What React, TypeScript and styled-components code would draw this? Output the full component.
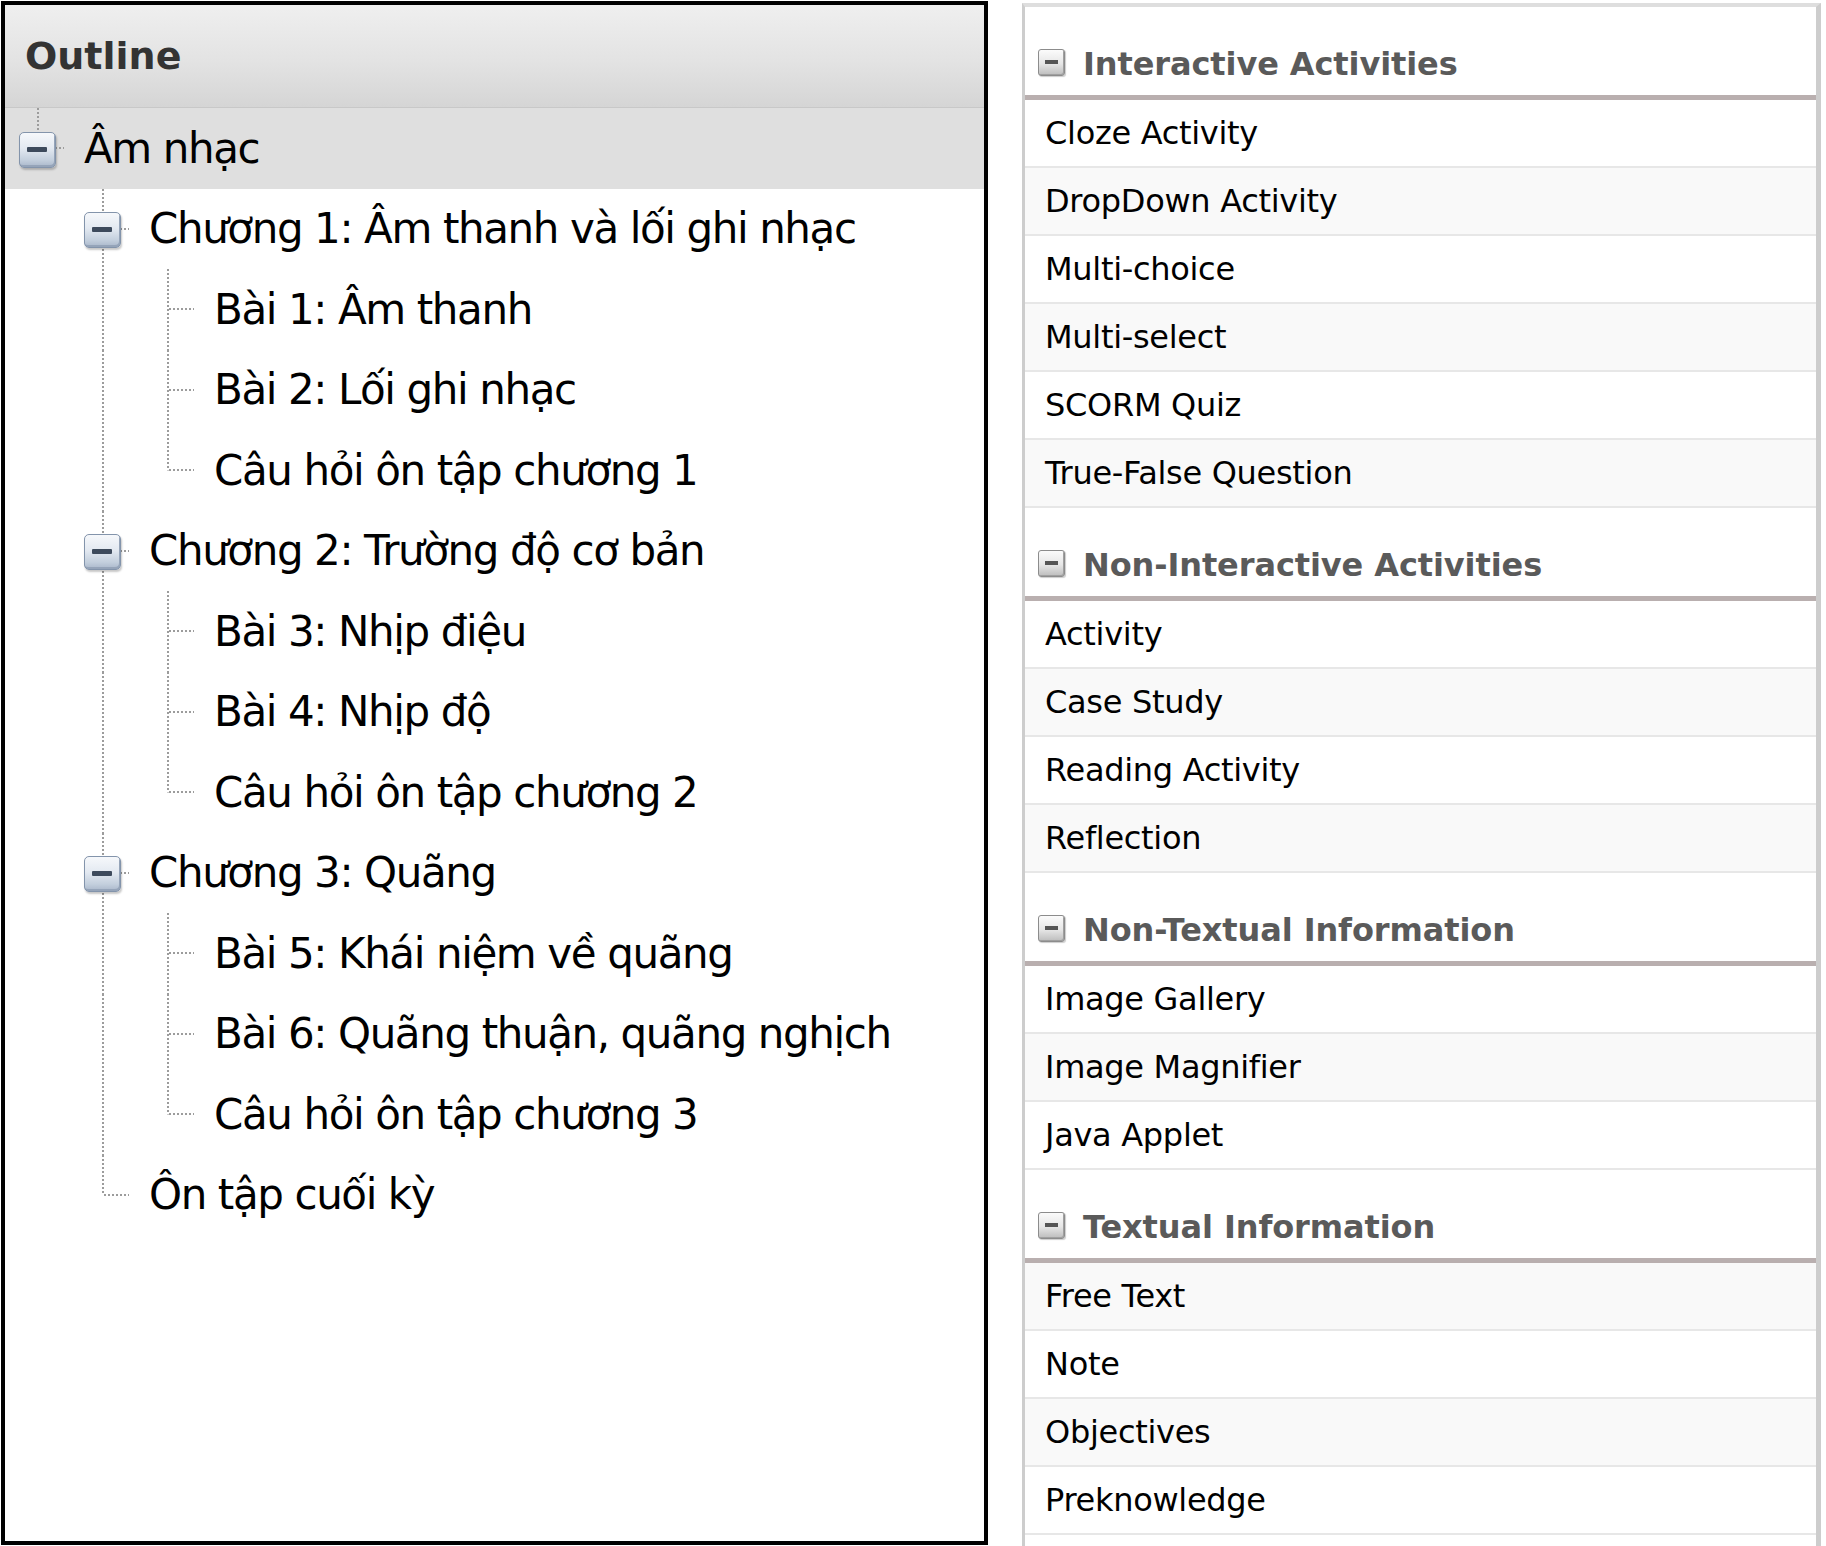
import React from 'react';
import styled, { createGlobalStyle, css } from 'styled-components';

const GlobalStyle = createGlobalStyle`
  html, body { margin: 0; padding: 0; background: #fff; }
  body { font-family: "DejaVu Sans", Verdana, sans-serif; }
  *, *::before, *::after { box-sizing: border-box; }
`;

const DOT = '#9c9c9c';
const dotV = `repeating-linear-gradient(to bottom, ${DOT} 0 2px, transparent 2px 4px)`;
const dotH = `repeating-linear-gradient(to right, ${DOT} 0 2px, transparent 2px 4px)`;

const Page = styled.div`
  display: flex;
  align-items: flex-start;
  gap: 34px;
  width: 1826px;
  height: 1546px;
  padding: 1px 0 0 1px;
  overflow: hidden;
`;

/* ---------- Outline (left) ---------- */

const OutlinePanel = styled.section`
  flex: none;
  width: 987px;
  height: 1544px;
  border: 4px solid #000;
  background: #fff;
  display: flex;
  flex-direction: column;
`;

const OutlineHeader = styled.header`
  height: 103px;
  flex: none;
  border-bottom: 1px solid #c8c8c8;
  background: linear-gradient(to bottom, #efefef 0%, #e3e3e3 55%, #d5d5d5 100%);
  display: flex;
  align-items: center;
  padding-left: 20px;
  font-weight: bold;
  font-size: 38px;
  color: #333;
`;

const TreeRow = styled.div<{ $selected?: boolean }>`
  display: flex;
  align-items: stretch;
  height: 80.5px;
  flex: none;
  background: ${(p) => (p.$selected ? '#dfdfdf' : 'transparent')};
`;

const Guide = styled.span<{ $line: boolean }>`
  flex: none;
  width: 65px;
  ${(p) =>
    p.$line &&
    css`
      background-image: ${dotV};
      background-repeat: no-repeat;
      background-size: 2px 100%;
      background-position: 32px 0;
    `}
`;

const Joint = styled.span<{ $last: boolean }>`
  flex: none;
  width: 65px;
  display: flex;
  align-items: center;
  justify-content: center;
  background-image: ${dotV}, ${dotH};
  background-repeat: no-repeat;
  background-size: 2px ${(p) => (p.$last ? '50%' : '100%')}, 25px 2px;
  background-position: 32px 0, 34px 50%;
`;

const ToggleBox = styled.span`
  position: relative;
  width: 37px;
  height: 36px;
  margin-top: 3px;
  border: 1px solid #8394ab;
  border-radius: 5px;
  background: linear-gradient(to bottom, #f6f8fb 0%, #e3e9f1 45%, #c3cfdd 80%, #a9b7ca 100%);
  box-shadow: inset -1px -2px 0 #95a4b9, 1px 2px 2px rgba(0, 0, 0, 0.22);
  &::after {
    content: '';
    position: absolute;
    left: 7px;
    top: 14px;
    width: 20px;
    height: 5px;
    border-radius: 1px;
    background: #3d4a5c;
  }
`;

const NodeLabel = styled.span`
  display: flex;
  align-items: center;
  margin-left: 14px;
  font-size: 42px;
  letter-spacing: -1.4px;
  color: #000;
  white-space: nowrap;
`;

/* ---------- Palette (right) ---------- */

const Palette = styled.aside`
  flex: none;
  width: 799px;
  height: 1545px;
  margin-top: 2px;
  border-top: 4px solid #dedede;
  border-left: 3px solid #cdcdcd;
  border-right: 5px solid #cdcdcd;
  background: #fff;
  display: flex;
  flex-direction: column;
  overflow: hidden;
`;

const SectionHeader = styled.div`
  flex: none;
  height: 93px;
  border-bottom: 5px solid #b9afaf;
  display: flex;
  align-items: center;
  gap: 18px;
  padding: 26px 0 0 13px;
  font-weight: bold;
  font-size: 32px;
  letter-spacing: -0.1px;
  color: #5a5a5a;
  white-space: nowrap;
`;

const CollapseBox = styled.span`
  position: relative;
  flex: none;
  width: 27px;
  height: 27px;
  margin-top: -4px;
  border: 1px solid #8c8c8c;
  border-radius: 3px;
  background: linear-gradient(to bottom, #fbfbfb 0%, #e6e6e6 55%, #bdbdbd 100%);
  box-shadow: inset -1px -1px 0 #a0a0a0, 1px 1px 1px rgba(0, 0, 0, 0.2);
  &::after {
    content: '';
    position: absolute;
    left: 6px;
    top: 10px;
    width: 13px;
    height: 4px;
    background: #555;
  }
`;

const Item = styled.div<{ $alt: boolean }>`
  flex: none;
  height: 68px;
  border-bottom: 2px solid #e7e7e7;
  background: ${(p) => (p.$alt ? '#f9f9f9' : '#fff')};
  display: flex;
  align-items: center;
  padding-left: 20px;
  font-size: 32px;
  letter-spacing: -0.3px;
  color: #000;
  white-space: nowrap;
`;

/* ---------- Data ---------- */

type Node = { label: string; children?: Node[] };

const tree: Node = {
  label: 'Âm nhạc',
  children: [
    {
      label: 'Chương 1: Âm thanh và lối ghi nhạc',
      children: [
        { label: 'Bài 1: Âm thanh' },
        { label: 'Bài 2: Lối ghi nhạc' },
        { label: 'Câu hỏi ôn tập chương 1' },
      ],
    },
    {
      label: 'Chương 2: Trường độ cơ bản',
      children: [
        { label: 'Bài 3: Nhịp điệu' },
        { label: 'Bài 4: Nhịp độ' },
        { label: 'Câu hỏi ôn tập chương 2' },
      ],
    },
    {
      label: 'Chương 3: Quãng',
      children: [
        { label: 'Bài 5: Khái niệm về quãng' },
        { label: 'Bài 6: Quãng thuận, quãng nghịch' },
        { label: 'Câu hỏi ôn tập chương 3' },
      ],
    },
    { label: 'Ôn tập cuối kỳ' },
  ],
};

type FlatRow = {
  label: string;
  guides: boolean[];
  last: boolean;
  folder: boolean;
  root: boolean;
};

function flatten(node: Node, guides: boolean[], last: boolean, out: FlatRow[], root = false) {
  out.push({ label: node.label, guides, last, folder: !!node.children, root });
  const kids = node.children ?? [];
  kids.forEach((k, i) => {
    flatten(k, [...guides, !last], i === kids.length - 1, out);
  });
  return out;
}

const rows = flatten(tree, [], true, [], true);

const sections: { title: string; items: string[] }[] = [
  {
    title: 'Interactive Activities',
    items: ['Cloze Activity', 'DropDown Activity', 'Multi-choice', 'Multi-select', 'SCORM Quiz', 'True-False Question'],
  },
  {
    title: 'Non-Interactive Activities',
    items: ['Activity', 'Case Study', 'Reading Activity', 'Reflection'],
  },
  {
    title: 'Non-Textual Information',
    items: ['Image Gallery', 'Image Magnifier', 'Java Applet'],
  },
  {
    title: 'Textual Information',
    items: ['Free Text', 'Note', 'Objectives', 'Preknowledge'],
  },
];

export default function App() {
  let counter = 0;
  return (
    <>
      <GlobalStyle />
      <Page>
        <OutlinePanel>
          <OutlineHeader>Outline</OutlineHeader>
          {rows.map((r, i) => (
            <TreeRow key={i} $selected={r.root}>
              {r.guides.map((g, j) => (
                <Guide key={j} $line={g} />
              ))}
              <Joint $last={r.last}>{r.folder && <ToggleBox />}</Joint>
              <NodeLabel>{r.label}</NodeLabel>
            </TreeRow>
          ))}
        </OutlinePanel>
        <Palette>
          {sections.map((s) => (
            <React.Fragment key={s.title}>
              <SectionHeader>
                <CollapseBox />
                {s.title}
              </SectionHeader>
              {s.items.map((it) => {
                const alt = counter++ % 2 === 1;
                return (
                  <Item key={it} $alt={alt}>
                    {it}
                  </Item>
                );
              })}
            </React.Fragment>
          ))}
        </Palette>
      </Page>
    </>
  );
}
